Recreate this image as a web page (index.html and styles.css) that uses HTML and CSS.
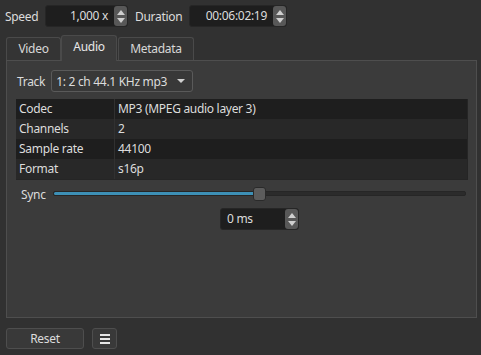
FILE: index.html
```html
<!DOCTYPE html>
<html lang="en">
<head>
<meta charset="UTF-8">
<title>Audio</title>
<link rel="stylesheet" href="styles.css">
</head>
<body>
<div class="top-row">
    <span class="label speed-label">Speed</span>
    <div class="spin speed">
        <span class="spin-value">1,000 x</span>
        <div class="spin-btns"><span class="up"></span><span class="down"></span></div>
    </div>
    <span class="label dur-label">Duration</span>
    <div class="spin duration">
        <span class="spin-value">00:06:02:19</span>
        <div class="spin-btns"><span class="up"></span><span class="down"></span></div>
    </div>
</div>

<div class="tabs">
    <div class="tab video">Video</div>
    <div class="tab active">Audio</div>
    <div class="tab meta">Metadata</div>
</div>

<div class="pane">
    <div class="track-row">
        <span class="label">Track</span>
        <div class="combo">
            <span>1: 2 ch 44.1 KHz mp3</span>
            <span class="combo-arrow"></span>
        </div>
    </div>
    <div class="info-table">
        <div class="row"><div class="key">Codec</div><div class="val">MP3 (MPEG audio layer 3)</div></div>
        <div class="row"><div class="key">Channels</div><div class="val">2</div></div>
        <div class="row"><div class="key">Sample rate</div><div class="val">44100</div></div>
        <div class="row"><div class="key">Format</div><div class="val">s16p</div></div>
    </div>
    <div class="sync-row">
        <span class="label sync-label">Sync</span>
        <div class="slider">
            <div class="groove"><div class="fill"></div></div>
            <div class="handle"></div>
        </div>
    </div>
    <div class="ms-row">
        <div class="spin ms">
            <span class="spin-value">0 ms</span>
            <div class="spin-btns"><span class="up"></span><span class="down"></span></div>
        </div>
    </div>
</div>

<div class="bottom-row">
    <button class="btn reset">Reset</button>
    <button class="btn menu">
        <svg width="10" height="10" viewBox="0 0 10 10"><rect x="0" y="0" width="10" height="2" fill="#e6e6e6"/><rect x="0" y="4" width="10" height="2" fill="#e6e6e6"/><rect x="0" y="8" width="10" height="2" fill="#e6e6e6"/></svg>
    </button>
</div>
</body>
</html>
```

FILE: styles.css
```css
body {
    margin: 0;
    width: 481px;
    height: 355px;
    background-color: #313131;
    font-family: 'Noto Sans', 'DejaVu Sans', sans-serif;
    font-size: 12px;
    letter-spacing: -0.3px;
    color: #dcdcdc;
    overflow: hidden;
}
.top-row {
    display: flex;
    align-items: center;
    height: 22px;
    padding: 5px 0 0 5px;
}
.label {
    color: #dcdcdc;
}
.speed-label {
    width: 40px;
}
.spin {
    display: flex;
    align-items: stretch;
    height: 20px;
    background-color: #1e1e1e;
    border: 1px solid #262626;
    border-radius: 3px;
}
.spin-value {
    flex-grow: 1;
    text-align: right;
    line-height: 20px;
    padding-right: 6px;
}
.spin-btns {
    width: 13px;
    display: flex;
    flex-direction: column;
    justify-content: center;
    align-items: center;
    gap: 3px;
    background-color: #585858;
    border-radius: 3px;
}
.spin-btns .up {
    width: 0;
    height: 0;
    border-left: 4px solid transparent;
    border-right: 4px solid transparent;
    border-bottom: 5px solid #cfcfcf;
}
.spin-btns .down {
    width: 0;
    height: 0;
    border-left: 4px solid transparent;
    border-right: 4px solid transparent;
    border-top: 5px solid #cfcfcf;
}
.speed {
    width: 81px;
}
.dur-label {
    width: 54px;
    margin-left: 7px;
}
.duration {
    width: 96px;
}
.tabs {
    display: flex;
    align-items: flex-end;
    height: 25px;
    margin: 8px 0 0 6px;
}
.tab {
    height: 23px;
    line-height: 22px;
    text-align: center;
    background-color: #343434;
    border: 1px solid #4a4a4a;
    border-bottom: none;
    border-radius: 3px 3px 0 0;
    color: #d8d8d8;
    box-sizing: border-box;
}
.video {
    width: 55px;
}
.tab.active {
    width: 56px;
    height: 26px;
    line-height: 22px;
    background-color: #3b3b3b;
    position: relative;
    z-index: 1;
    margin-bottom: -1px;
    color: #e8e8e8;
}
.meta {
    width: 76px;
    margin-left: 1px;
}
.pane {
    margin: 0 4px 0 6px;
    height: 258px;
    box-sizing: border-box;
    background-color: #3b3b3b;
    border: 1px solid #4e4e4e;
    padding: 9px 9px 0 9px;
}
.track-row {
    display: flex;
    align-items: center;
    height: 22px;
    padding-left: 1px;
}
.combo {
    display: flex;
    align-items: center;
    justify-content: space-between;
    width: 129px;
    height: 20px;
    margin-left: 6px;
    padding: 0 7px 0 4px;
    background-color: #383838;
    border: 1px solid #5a5a5a;
    border-radius: 3px;
}
.combo-arrow {
    width: 0;
    height: 0;
    border-left: 4px solid transparent;
    border-right: 4px solid transparent;
    border-top: 4px solid #cfcfcf;
}
.info-table {
    margin-top: 7px;
    width: 451px;
    border-right: 1px solid #252525;
    border-bottom: 1px solid #252525;
}
.row {
    display: flex;
    height: 20px;
    line-height: 19px;
    background-color: #1e1e1e;
}
.row:nth-child(2n) {
    background-color: #282828;
}
.key {
    width: 95px;
    padding-left: 3px;
    border-right: 1px solid #313131;
}
.val {
    padding-left: 3px;
}
.sync-row {
    display: flex;
    align-items: center;
    height: 16px;
    margin-top: 6px;
}
.sync-label {
    width: 37px;
    padding-left: 5px;
    box-sizing: border-box;
}
.slider {
    position: relative;
    width: 413px;
    height: 16px;
}
.groove {
    position: absolute;
    left: 0;
    right: 0;
    top: 5px;
    height: 3px;
    background-color: #2b2b2b;
    border: 1px solid #262626;
    border-radius: 2px;
}
.fill {
    width: 202px;
    height: 3px;
    background-color: #3d90b6;
    border-radius: 2px;
}
.handle {
    position: absolute;
    left: 200px;
    top: 1px;
    width: 11px;
    height: 12px;
    background-color: #5c5c5c;
    border: 1px solid #2a2a2a;
    border-radius: 3px;
}
.ms-row {
    display: flex;
    margin-top: 6px;
    padding-left: 204px;
}
.ms {
    width: 77px;
}
.ms .spin-value {
    text-align: left;
    padding-left: 6px;
}
.bottom-row {
    display: flex;
    align-items: center;
    margin: 10px 0 0 6px;
}
.btn {
    height: 21px;
    background-color: #393939;
    border: 1px solid #4e4e4e;
    border-radius: 3px;
    color: #dcdcdc;
    font-family: 'Noto Sans', 'DejaVu Sans', sans-serif;
    font-size: 12px;
    letter-spacing: -0.3px;
    padding: 0;
}
.reset {
    width: 78px;
}
.menu {
    width: 25px;
    margin-left: 8px;
    display: flex;
    align-items: center;
    justify-content: center;
}
```
